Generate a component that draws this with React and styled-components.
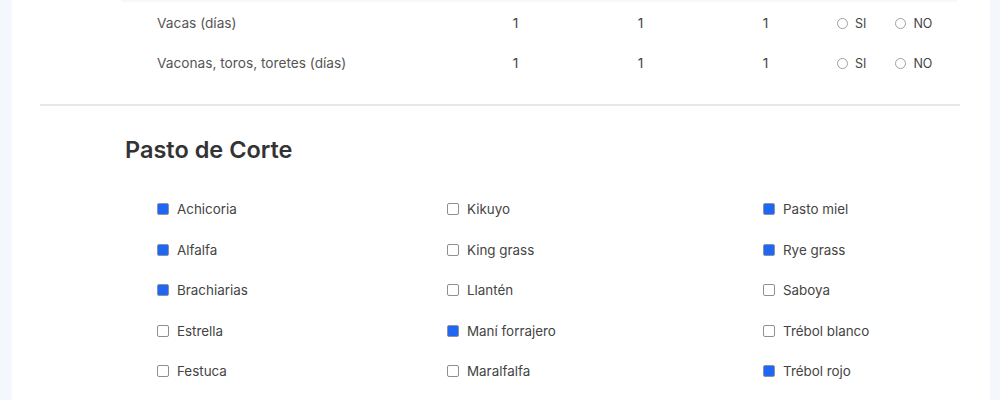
import styled, { createGlobalStyle } from "styled-components";

const GlobalStyle = createGlobalStyle`
  html, body {
    margin: 0;
    padding: 0;
    background: #f4f7fb;
    font-family: Inter, "Noto Sans", sans-serif;
  }
`;

const animals = [
  { id: 1, name: "Vacas (días)", values: [1, 1, 1] },
  { id: 2, name: "Vaconas, toros, toretes (días)", values: [1, 1, 1] },
];

const pastos = [
  [
    { name: "Achicoria", checked: true },
    { name: "Alfalfa", checked: true },
    { name: "Brachiarias", checked: true },
    { name: "Estrella", checked: false },
    { name: "Festuca", checked: false },
  ],
  [
    { name: "Kikuyo", checked: false },
    { name: "King grass", checked: false },
    { name: "Llantén", checked: false },
    { name: "Maní forrajero", checked: true },
    { name: "Maralfalfa", checked: false },
  ],
  [
    { name: "Pasto miel", checked: true },
    { name: "Rye grass", checked: true },
    { name: "Saboya", checked: false },
    { name: "Trébol blanco", checked: false },
    { name: "Trébol rojo", checked: true },
  ],
];

function App() {
  return (
    <>
      <GlobalStyle />
      <Page>
        <Card>
          <TableEdge />
          <Table>
            {animals.map((animal) => (
              <Row key={animal.id}>
                <Label>{animal.name}</Label>
                {animal.values.map((value, i) => (
                  <Value key={i}>{value}</Value>
                ))}
                <Radios>
                  <RadioOption>
                    <Circle />
                    SI
                  </RadioOption>
                  <RadioOption>
                    <Circle />
                    NO
                  </RadioOption>
                </Radios>
              </Row>
            ))}
          </Table>
          <Divider />
          <Section>
            <Title>Pasto de Corte</Title>
            <Options>
              {pastos.map((column, i) => (
                <Column key={i}>
                  {column.map((pasto) => (
                    <Option key={pasto.name}>
                      <Box $checked={pasto.checked} />
                      {pasto.name}
                    </Option>
                  ))}
                </Column>
              ))}
            </Options>
          </Section>
        </Card>
      </Page>
    </>
  );
}

const Page = styled.div`
  width: 1000px;
  height: 400px;
  overflow: hidden;
  padding-left: 12px;
  box-sizing: border-box;
`;

const Card = styled.div`
  width: 978px;
  height: 100%;
  background: #ffffff;
  padding: 0 30px 0 28px;
  box-sizing: border-box;
`;

const TableEdge = styled.div`
  margin: 0 3px 0 81px;
  height: 2px;
  background: #f7f8fa;
`;

const Table = styled.div`
  display: flex;
  flex-direction: column;
  padding: 1px 0 0 117px;
`;

const Row = styled.div`
  display: grid;
  grid-template-columns: 296px 125px 125px 125px auto;
  align-items: center;
  height: 40px;
  font-size: 13.7px;
  color: #555555;
`;

const Label = styled.div`
  color: #555555;
`;

const Value = styled.div`
  text-align: center;
  color: #444444;
`;

const Radios = styled.div`
  display: flex;
  gap: 29px;
  padding-left: 9px;
`;

const RadioOption = styled.div`
  display: flex;
  align-items: center;
  gap: 7px;
  font-size: 12.5px;
  color: #444444;
`;

const Circle = styled.span`
  width: 11px;
  height: 11px;
  border: 1px solid #a0a0a0;
  border-radius: 50%;
  box-sizing: border-box;
`;

const Divider = styled.div`
  height: 2px;
  background: #e6e7ea;
  margin-top: 21px;
`;

const Section = styled.div`
  padding: 0 0 0 85px;
`;

const Title = styled.h2`
  margin: 29px 0 0 0;
  font-size: 23.5px;
  font-weight: 600;
  color: #333333;
  line-height: 30px;
`;

const Options = styled.div`
  display: grid;
  grid-template-columns: 290px 316px auto;
  padding: 24px 0 0 32px;
`;

const Column = styled.div`
  display: flex;
  flex-direction: column;
`;

const Option = styled.div`
  display: flex;
  align-items: center;
  gap: 8px;
  height: 40.5px;
  font-size: 13.4px;
  color: #444444;
`;

const Box = styled.span`
  width: 12px;
  height: 12px;
  box-sizing: border-box;
  border: 1px solid ${(props) => (props.$checked ? "#8a93a6" : "#8f8f8f")};
  border-radius: 2px;
  background: ${(props) => (props.$checked ? "#1f66f2" : "#ffffff")};
`;

export default App;
